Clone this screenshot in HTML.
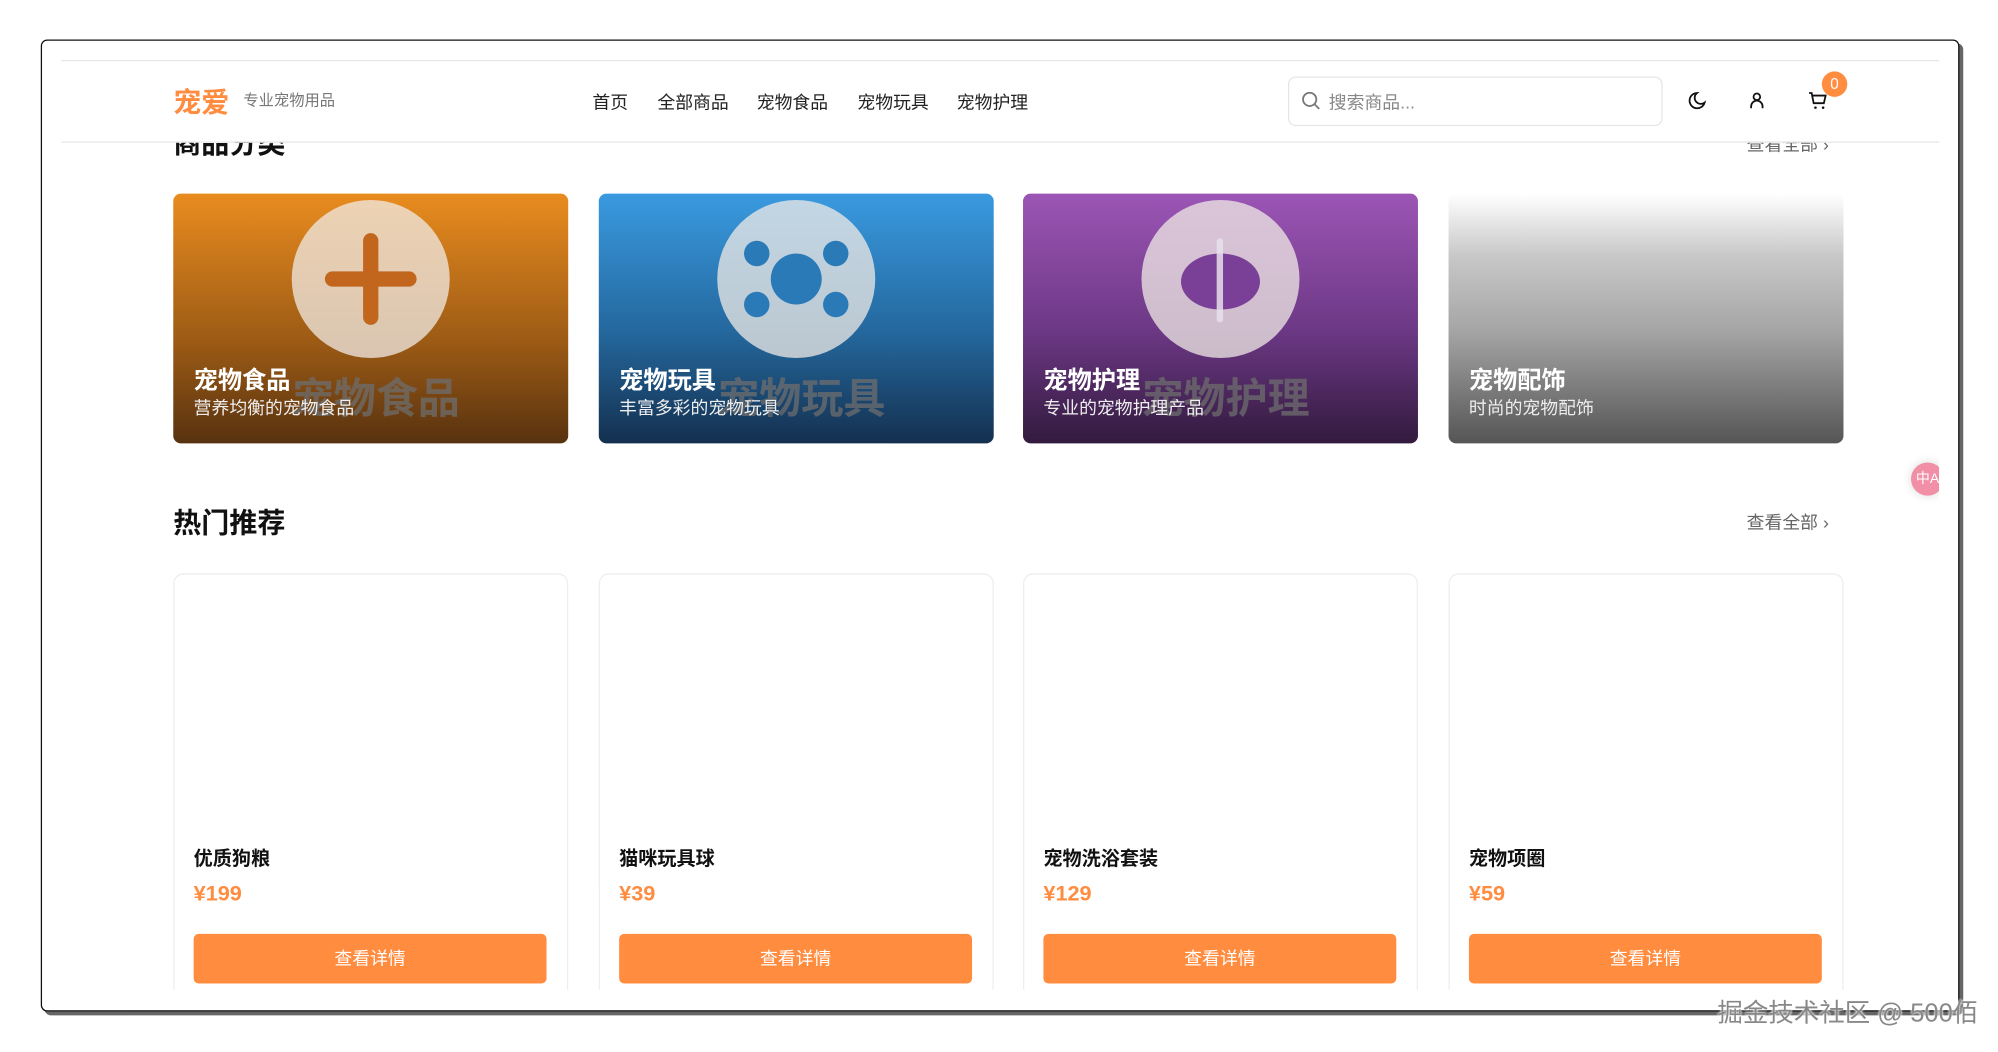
<!DOCTYPE html>
<html><head><meta charset="utf-8">
<style>
html,body{margin:0;padding:0;width:1998px;height:1051px;overflow:hidden;background:#fff;font-family:"Liberation Sans","Noto Sans CJK SC",sans-serif;}
#s{position:absolute;left:0;top:0;width:1570px;height:826px;transform:scale(1.274);transform-origin:0 0;}
.frame{position:absolute;left:32px;top:31px;width:1504px;height:761px;border:1px solid #111;border-radius:5px;box-shadow:3px 3px 0 #666;background:#fff;overflow:hidden;}
.in{position:absolute;left:15px;top:15px;width:1474px;height:730px;overflow:hidden;background:#fff;}
.abs{position:absolute;}
.hdr{position:absolute;left:0;top:0;width:1474px;height:63px;background:#fff;border-top:1px solid #e4e4e4;border-bottom:1px solid #e6e6e6;z-index:5;}
.nav span{position:absolute;top:22px;font-size:14px;color:#222;}
.cat{position:absolute;top:105px;width:310px;height:196px;border-radius:6px;overflow:hidden;}
.circ{position:absolute;left:93px;top:5px;width:124px;height:124px;border-radius:50%;background:rgba(240,235,230,.75);}
.ct{position:absolute;left:16px;top:132px;color:#fff;font-weight:bold;font-size:19px;}
.cs{position:absolute;left:16px;top:158px;color:#eee;font-size:14px;}
.gh{position:absolute;left:93px;top:134px;color:rgba(110,110,110,.75);font-weight:bold;font-size:33px;}
.pc{position:absolute;top:403px;width:308px;height:400px;border:1px solid #eee;border-radius:8px;background:#fff;}
.pn{position:absolute;left:15px;top:212px;font-size:15px;font-weight:bold;color:#111;}
.pp{position:absolute;left:15px;top:241px;font-size:17px;font-weight:bold;color:#ff8c3f;}
.pb{position:absolute;left:15px;top:282px;width:277px;height:39px;background:#ff8c3f;border-radius:4px;color:#fff;font-size:14px;text-align:center;line-height:39px;}
</style></head><body>
<div id="s">
<div class="frame"><div class="in">
 <div class="abs" style="left:88px;top:48px;font-size:22px;font-weight:bold;color:#111;">商品分类</div>
 <div class="abs" style="left:1323px;top:56px;font-size:14px;color:#666;">查看全部 ›</div>
 <div class="hdr">
  <div class="abs" style="left:88px;top:15px;font-size:22px;font-weight:bold;color:#ff8c3f;">宠爱</div>
  <div class="abs" style="left:143px;top:22px;font-size:12px;color:#777;">专业宠物用品</div>
  <div class="nav"><span style="left:417px">首页</span><span style="left:468px">全部商品</span><span style="left:546px">宠物食品</span><span style="left:625px">宠物玩具</span><span style="left:703px">宠物护理</span></div>
  <div class="abs" style="left:963px;top:12px;width:292px;height:37px;border:1px solid #e6e6e6;border-radius:6px;">
   <svg class="abs" style="left:9px;top:10px" width="16" height="16" viewBox="0 0 16 16"><circle cx="7" cy="7" r="5.2" fill="none" stroke="#777" stroke-width="1.4"/><path d="M11 11l3.5 3.5" stroke="#777" stroke-width="1.4"/></svg>
   <div class="abs" style="left:31px;top:9px;font-size:14px;color:#888;">搜索商品...</div>
  </div>
  <svg class="abs" style="left:1276px;top:23px" width="16" height="16" viewBox="0 0 16 16"><path d="M8 2a6 6 0 1 0 6 7.5A4.8 4.8 0 0 1 8 2z" fill="none" stroke="#111" stroke-width="1.4"/></svg>
  <svg class="abs" style="left:1323px;top:23px" width="16" height="16" viewBox="0 0 16 16"><circle cx="8" cy="5" r="2.6" fill="none" stroke="#111" stroke-width="1.4"/><path d="M3.5 14v-1.5a4.5 4.5 0 0 1 9 0V14" fill="none" stroke="#111" stroke-width="1.4"/></svg>
  <svg class="abs" style="left:1371px;top:23px" width="16" height="16" viewBox="0 0 16 16"><path d="M1 2h2l1.6 8h8l1.4-6H4" fill="none" stroke="#111" stroke-width="1.4"/><circle cx="6" cy="13.5" r="1" fill="#111"/><circle cx="12" cy="13.5" r="1" fill="#111"/></svg>
  <div class="abs" style="left:1382px;top:8px;width:20px;height:20px;border-radius:50%;background:#ff8c3f;color:#fff;font-size:12px;text-align:center;line-height:20px;">0</div>
 </div>
 <div class="cat" style="left:88px;background:linear-gradient(#e98c1f,#9b5a15 60%,#583210);">
  <div class="circ"><div class="abs" style="left:56px;top:26px;width:12px;height:72px;border-radius:6px;background:#c2651d"></div><div class="abs" style="left:26px;top:56px;width:72px;height:12px;border-radius:6px;background:#c2651d"></div></div>
  <div class="gh">宠物食品</div><div class="ct">宠物食品</div><div class="cs">营养均衡的宠物食品</div></div>
 <div class="cat" style="left:422px;background:linear-gradient(#3a9ae0,#24689e 55%,#14304f);">
  <div class="circ"><div class="abs" style="left:42px;top:42px;width:40px;height:40px;border-radius:50%;background:#2a7ab8"></div><div class="abs" style="left:21px;top:32px;width:20px;height:20px;border-radius:50%;background:#2a7ab8"></div><div class="abs" style="left:83px;top:32px;width:20px;height:20px;border-radius:50%;background:#2a7ab8"></div><div class="abs" style="left:21px;top:72px;width:20px;height:20px;border-radius:50%;background:#2a7ab8"></div><div class="abs" style="left:83px;top:72px;width:20px;height:20px;border-radius:50%;background:#2a7ab8"></div></div>
  <div class="gh">宠物玩具</div><div class="ct">宠物玩具</div><div class="cs">丰富多彩的宠物玩具</div></div>
 <div class="cat" style="left:755px;background:linear-gradient(#9c55b5,#6c3885 55%,#321a3d);">
  <div class="circ"><div class="abs" style="left:31px;top:42px;width:62px;height:44px;border-radius:50%;background:#7a3f96"></div><div class="abs" style="left:59px;top:30px;width:5px;height:66px;border-radius:3px;background:rgba(230,225,235,.85)"></div></div>
  <div class="gh">宠物护理</div><div class="ct">宠物护理</div><div class="cs">专业的宠物护理产品</div></div>
 <div class="cat" style="left:1089px;background:linear-gradient(#fff,#c8c8c8 25%,#a5a5a5 55%,#555);">
  <div class="ct">宠物配饰</div><div class="cs">时尚的宠物配饰</div></div>
 <div class="abs" style="left:1452px;top:316px;width:26px;height:26px;border-radius:50%;background:#f08fa6;box-shadow:0 0 8px rgba(0,0,0,.15);color:#fff;font-size:11px;line-height:26px;text-align:center;">中A</div>
 <div class="abs" style="left:88px;top:346px;font-size:22px;font-weight:bold;color:#111;">热门推荐</div>
 <div class="abs" style="left:1323px;top:353px;font-size:14px;color:#666;">查看全部 ›</div>
 <div class="pc" style="left:88px"><div class="pn">优质狗粮</div><div class="pp">¥199</div><div class="pb">查看详情</div></div>
 <div class="pc" style="left:422px"><div class="pn">猫咪玩具球</div><div class="pp">¥39</div><div class="pb">查看详情</div></div>
 <div class="pc" style="left:755px"><div class="pn">宠物洗浴套装</div><div class="pp">¥129</div><div class="pb">查看详情</div></div>
 <div class="pc" style="left:1089px"><div class="pn">宠物项圈</div><div class="pp">¥59</div><div class="pb">查看详情</div></div>
</div></div>
<div class="abs" style="left:1348px;top:779px;font-size:20px;color:#888;text-shadow:0 0 2px #fff,0 0 2px #fff;white-space:nowrap;">掘金技术社区 @ 500佰</div>
</div>
</body></html>
